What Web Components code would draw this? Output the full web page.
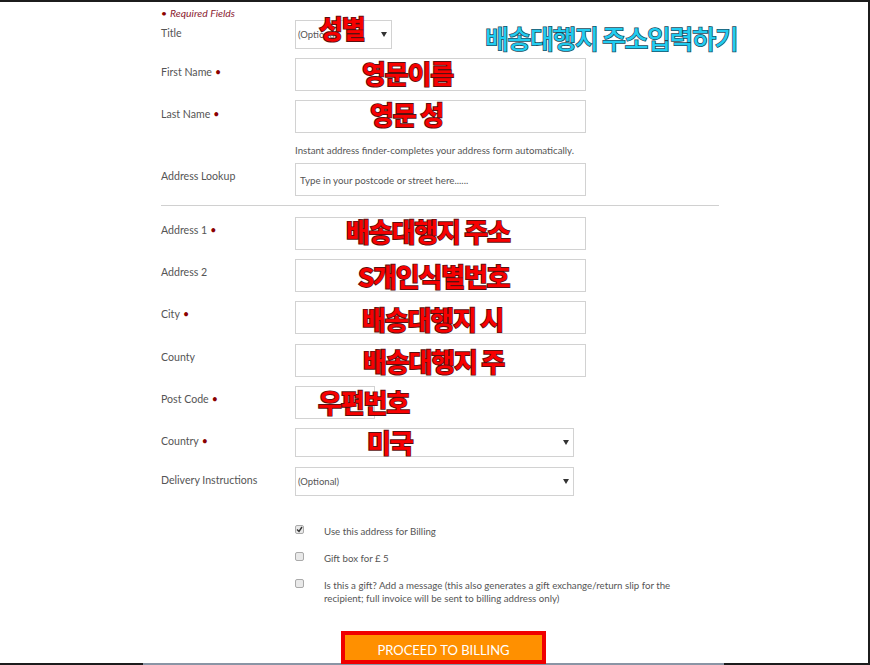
<!DOCTYPE html>
<html>
<head>
<meta charset="utf-8">
<title>Delivery address</title>
<style>
html, body { margin: 0; padding: 0; background: #fff; }
</style>
</head>
<body>
<checkout-page>
  <address-form>
    <required-note>Required Fields</required-note>
    <form-row label="Title" kind="select" value="(Optional)" width="97" height="29" gap="9" top="6"></form-row>
    <form-row label="First Name" required kind="input" gap="9" top="7"></form-row>
    <form-row label="Last Name" required kind="input" gap="10" top="7"></form-row>
    <lookup-hint>Instant address finder-completes your address form automatically.</lookup-hint>
    <form-row label="Address Lookup" kind="input" value="Type in your postcode or street here......" gap="9" top="6"></form-row>
    <form-divider></form-divider>
    <form-row label="Address 1" required kind="input" gap="9" top="6"></form-row>
    <form-row label="Address 2" kind="input" gap="9" top="6"></form-row>
    <form-row label="City" required kind="input" gap="10" top="6"></form-row>
    <form-row label="County" kind="input" gap="9" top="6"></form-row>
    <form-row label="Post Code" required kind="input" width="80" gap="9" top="6"></form-row>
    <form-row label="Country" required kind="select" width="279" height="29" gap="10" top="6"></form-row>
    <form-row label="Delivery Instructions" kind="select" value="(Optional)" width="279" height="29" gap="28" top="6"></form-row>
    <check-row checked>Use this address for Billing</check-row>
    <check-row>Gift box for £ 5</check-row>
    <check-row>Is this a gift? Add a message (this also generates a gift exchange/return slip for the recipient; full invoice will be sent to billing address only)</check-row>
    <proceed-button>PROCEED TO BILLING</proceed-button>
  </address-form>

  <red-note x="319" y="10">성별</red-note>
  <red-note x="362" y="55">영문이름</red-note>
  <red-note x="370" y="96">영문 성</red-note>
  <red-note x="346" y="213">배송대행지 주소</red-note>
  <red-note x="358" y="258">S개인식별번호</red-note>
  <red-note x="362" y="301">배송대행지 시</red-note>
  <red-note x="363" y="343">배송대행지 주</red-note>
  <red-note x="318" y="384">우편번호</red-note>
  <red-note x="367" y="424">미국</red-note>
  <red-note x="485" y="20" tone="blue">배송대행지 주소입력하기</red-note>
</checkout-page>

<script>
// page frame, the dark edge comes from the captured window
class CheckoutPage extends HTMLElement {
    constructor() {
        super();
        this.attachShadow({ mode: "open" }).innerHTML = `
            <style>
                :host {
                    display: block;
                    position: relative;
                    box-sizing: border-box;
                    width: 870px;
                    height: 665px;
                    overflow: hidden;
                    background:
                        linear-gradient(#8a95a5, #8a95a5) 143px 100% / 581px 2px no-repeat,
                        linear-gradient(#1c1c1c, #1c1c1c) 0 100% / 100% 2px no-repeat,
                        #fff;
                    border-top: 2px solid #1c1c1c;
                    border-right: 2px solid #1c1c1c;
                    font-family: Lato, "Liberation Sans", sans-serif;
                    color: #555;
                }
            </style>
            <slot></slot>
        `;
    }
}

class AddressForm extends HTMLElement {
    constructor() {
        super();
        this.attachShadow({ mode: "open" }).innerHTML = `
            <style>
                :host {
                    display: flex;
                    flex-direction: column;
                    box-sizing: border-box;
                    width: 558px;
                    margin-left: 161px;
                    padding-top: 6px;
                }
            </style>
            <slot></slot>
        `;
    }
}

class RequiredNote extends HTMLElement {
    constructor() {
        super();
        this.attachShadow({ mode: "open" }).innerHTML = `
            <style>
                :host {
                    display: block;
                    height: 12px;
                    line-height: 11px;
                    font-size: 10.4px;
                    font-style: italic;
                    color: #8b2332;
                }
                b { font-style: normal; font-weight: 400; color: #8b0000; margin-right: 3px; }
            </style>
            <b>•</b><slot></slot>
        `;
    }
}

class FormRow extends HTMLElement {
    connectedCallback() {
        const label = this.getAttribute("label") || "";
        const kind = this.getAttribute("kind") || "input";
        const value = this.getAttribute("value") || "";
        const width = this.getAttribute("width") || "291";
        const height = this.getAttribute("height") || "33";
        const gap = this.getAttribute("gap") || "10";
        const top = this.getAttribute("top") || "6";
        const star = this.hasAttribute("required") ? '<i>•</i>' : "";
        const arrow = kind === "select" ? '<span class="arrow"></span>' : "";
        const root = this.shadowRoot || this.attachShadow({ mode: "open" });
        root.innerHTML = `
            <style>
                :host {
                    display: grid;
                    grid-template-columns: 134px 1fr;
                    margin-bottom: ${gap}px;
                }
                .label {
                    padding-top: ${top}px;
                    font-size: 10.6px;
                    line-height: 14px;
                    color: #555;
                }
                i { font-style: normal; color: #8b0000; margin-left: 3px; }
                .box {
                    display: flex;
                    align-items: center;
                    justify-content: space-between;
                    box-sizing: border-box;
                    width: ${width}px;
                    height: ${height}px;
                    padding: 0 4px 0 ${kind === "select" ? 2 : 4}px;
                    border: 1px solid #d2d2d2;
                    background: #fff;
                    font-size: ${kind === "select" ? 9.5 : 9.75}px;
                    color: #555;
                }
                .arrow {
                    width: 0;
                    height: 0;
                    border-left: 3px solid transparent;
                    border-right: 3px solid transparent;
                    border-top: 5px solid #333;
                }
            </style>
            <span class="label">${label}${star}</span>
            <div class="box"><span>${value}</span>${arrow}</div>
        `;
    }
}

class LookupHint extends HTMLElement {
    constructor() {
        super();
        this.attachShadow({ mode: "open" }).innerHTML = `
            <style>
                :host {
                    display: block;
                    margin-left: 134px;
                    height: 14px;
                    margin-bottom: 6px;
                    font-size: 9.7px;
                    line-height: 14px;
                    color: #555;
                }
            </style>
            <slot></slot>
        `;
    }
}

class FormDivider extends HTMLElement {
    constructor() {
        super();
        this.attachShadow({ mode: "open" }).innerHTML = `
            <style>
                :host { display: block; height: 1px; background: #d0d0d0; margin-bottom: 11px; }
            </style>
        `;
    }
}

class CheckRow extends HTMLElement {
    constructor() {
        super();
        const on = this.hasAttribute("checked");
        this.attachShadow({ mode: "open" }).innerHTML = `
            <style>
                :host {
                    display: grid;
                    grid-template-columns: 29px 352px;
                    margin-left: 134px;
                    margin-bottom: 13px;
                    font-size: 9.7px;
                    line-height: 13px;
                    color: #555;
                }
                .tick {
                    box-sizing: border-box;
                    width: 9px;
                    height: 9px;
                    margin-top: 1px;
                    border: 1px solid #aaa;
                    border-radius: 2px;
                    background: #e9e9e9;
                }
                svg { display: block; width: 7px; height: 7px; }
                .text { padding-top: 1px; }
            </style>
            <div class="tick">${on ? '<svg viewBox="0 0 7 7"><path d="M1 3.5 3 5.5 6 1" fill="none" stroke="#333" stroke-width="1.4"/></svg>' : ""}</div>
            <div class="text"><slot></slot></div>
        `;
    }
}

class ProceedButton extends HTMLElement {
    constructor() {
        super();
        this.attachShadow({ mode: "open" }).innerHTML = `
            <style>
                :host {
                    display: flex;
                    align-items: center;
                    justify-content: center;
                    box-sizing: border-box;
                    width: 205px;
                    height: 33px;
                    padding-top: 4px;
                    margin: 13px 0 0 180px;
                    background: #ff9000;
                    border: 4px solid #f00000;
                    color: #fff;
                    font-size: 13px;
                }
            </style>
            <slot></slot>
        `;
    }
}

// hand-written notes on top of the screenshot, their place is the content
class RedNote extends HTMLElement {
    constructor() {
        super();
        const blue = this.getAttribute("tone") === "blue";
        this.attachShadow({ mode: "open" }).innerHTML = `
            <style>
                :host {
                    position: absolute;
                    left: ${this.getAttribute("x")}px;
                    top: ${this.getAttribute("y") - 2}px;
                    white-space: nowrap;
                    font-family: "Noto Sans CJK KR", sans-serif;
                    font-size: 26px;
                    line-height: 36px;
                    font-weight: ${blue ? 500 : 700};
                    letter-spacing: ${blue ? -1.4 : -1.2}px;
                    color: ${blue ? "#22ccf0" : "#f80000"};
                    -webkit-text-stroke: ${blue ? "1.5px #1d4a5a" : "1.8px #5a1010"};
                    paint-order: stroke fill;
                }
            </style>
            <slot></slot>
        `;
    }
}

customElements.define("checkout-page", CheckoutPage);
customElements.define("address-form", AddressForm);
customElements.define("required-note", RequiredNote);
customElements.define("form-row", FormRow);
customElements.define("lookup-hint", LookupHint);
customElements.define("form-divider", FormDivider);
customElements.define("check-row", CheckRow);
customElements.define("proceed-button", ProceedButton);
customElements.define("red-note", RedNote);
</script>
</body>
</html>
